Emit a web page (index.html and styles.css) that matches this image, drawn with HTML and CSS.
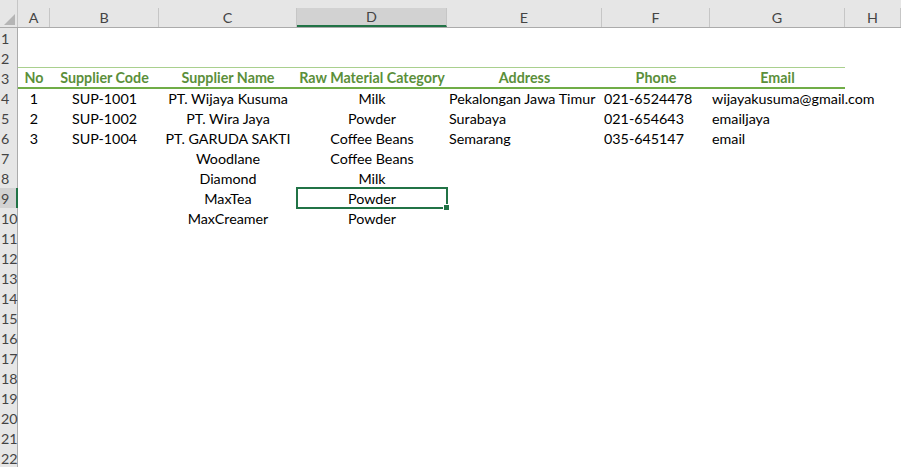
FILE: index.html
```html
<!DOCTYPE html>
<html>
<head>
  <meta http-equiv="CONTENT-TYPE" content="text/html; charset=UTF-8">
  <title>Suppliers</title>
  <link rel="stylesheet" href="styles.css">
</head>
<body>
  <div class="sheet">
    <div class="row colhead">
      <div class="corner"></div>
      <div class="ch">A</div>
      <div class="ch">B</div>
      <div class="ch">C</div>
      <div class="ch sel">D</div>
      <div class="ch">E</div>
      <div class="ch">F</div>
      <div class="ch">G</div>
      <div class="ch">H</div>
    </div>

    <div class="row"><div class="rh">1</div></div>
    <div class="row"><div class="rh">2</div></div>

    <div class="row head">
      <div class="rh">3</div>
      <div class="c th">No</div>
      <div class="c th">Supplier Code</div>
      <div class="c th">Supplier Name</div>
      <div class="c th">Raw Material Category</div>
      <div class="c th">Address</div>
      <div class="c th">Phone</div>
      <div class="c th">Email</div>
    </div>

    <div class="row">
      <div class="rh">4</div>
      <div class="c">1</div>
      <div class="c">SUP-1001</div>
      <div class="c">PT. Wijaya Kusuma</div>
      <div class="c">Milk</div>
      <div class="c l">Pekalongan Jawa Timur</div>
      <div class="c l">021-6524478</div>
      <div class="c l">wijayakusuma@gmail.com</div>
    </div>
    <div class="row">
      <div class="rh">5</div>
      <div class="c">2</div>
      <div class="c">SUP-1002</div>
      <div class="c">PT. Wira Jaya</div>
      <div class="c">Powder</div>
      <div class="c l">Surabaya</div>
      <div class="c l">021-654643</div>
      <div class="c l">emailjaya</div>
    </div>
    <div class="row">
      <div class="rh">6</div>
      <div class="c">3</div>
      <div class="c">SUP-1004</div>
      <div class="c">PT. GARUDA SAKTI</div>
      <div class="c">Coffee Beans</div>
      <div class="c l">Semarang</div>
      <div class="c l">035-645147</div>
      <div class="c l">email</div>
    </div>
    <div class="row">
      <div class="rh">7</div>
      <div class="c"></div>
      <div class="c"></div>
      <div class="c">Woodlane</div>
      <div class="c">Coffee Beans</div>
    </div>
    <div class="row">
      <div class="rh">8</div>
      <div class="c"></div>
      <div class="c"></div>
      <div class="c">Diamond</div>
      <div class="c">Milk</div>
    </div>
    <div class="row">
      <div class="rh sel">9</div>
      <div class="c"></div>
      <div class="c"></div>
      <div class="c">MaxTea</div>
      <div class="c active">Powder</div>
    </div>
    <div class="row">
      <div class="rh">10</div>
      <div class="c"></div>
      <div class="c"></div>
      <div class="c">MaxCreamer</div>
      <div class="c">Powder</div>
    </div>

    <div class="row"><div class="rh">11</div></div>
    <div class="row"><div class="rh">12</div></div>
    <div class="row"><div class="rh">13</div></div>
    <div class="row"><div class="rh">14</div></div>
    <div class="row"><div class="rh">15</div></div>
    <div class="row"><div class="rh">16</div></div>
    <div class="row"><div class="rh">17</div></div>
    <div class="row"><div class="rh">18</div></div>
    <div class="row"><div class="rh">19</div></div>
    <div class="row"><div class="rh">20</div></div>
    <div class="row"><div class="rh">21</div></div>
    <div class="row"><div class="rh">22</div></div>
  </div>
</body>
</html>
```

FILE: styles.css
```css
body {
  margin: 0;
  background: white;
  font-family: Lato, "Open Sans", sans-serif;
  font-size: 14.3px;
  color: #000;
  overflow: hidden;
}
.sheet {
  width: 901px;
  height: 467px;
  overflow: hidden;
}
.row {
  display: grid;
  grid-template-columns: 18px 32px 109px 138px 150px 155px 108px 135px 56px;
  height: 20px;
}
.colhead {
  height: 28px;
  background: #e6e6e6;
  border-bottom: 1px solid #ababab;
  box-sizing: border-box;
}
.corner {
  position: relative;
  background: #e6e6e6;
  border-right: 1px solid #c6c6c6;
}
.corner::after {
  content: "";
  position: absolute;
  right: 2px;
  bottom: 2px;
  border-left: 11px solid transparent;
  border-bottom: 11px solid #b5b5b5;
}
.ch {
  margin-top: 8px;
  height: 19px;
  line-height: 19px;
  text-align: center;
  color: #444;
  border-right: 1px solid #c6c6c6;
  box-sizing: border-box;
}
.ch.sel {
  background: #d2d2d2;
  border-bottom: 2px solid #217346;
  line-height: 17px;
}
.rh {
  background: #e6e6e6;
  border-right: 1px solid #ababab;
  border-bottom: 1px solid #d4d4d4;
  box-sizing: border-box;
  color: #444;
  line-height: 19px;
  padding: 1px 0 0 1px;
}
.rh.sel {
  background: #d2d2d2;
  border-right: 2px solid #217346;
}
.c {
  line-height: 20px;
  padding-top: 1px;
  text-align: center;
  white-space: nowrap;
  box-sizing: border-box;
  height: 20px;
}
.c.l {
  text-align: left;
  padding-left: 2px;
}
.head .c {
  border-top: 1px solid #a9d08e;
  border-bottom: 2px solid #70ad47;
  line-height: 18px;
  padding-top: 1px;
  margin-top: -1px;
  height: 22px;
}
.th {
  font-weight: bold;
  color: #5b8f3a;
}
.active {
  position: relative;
  border: 2px solid #217346;
  margin: -1px -1px 0 -1px;
  padding-top: 1px;
  line-height: 17px;
  height: 22px;
}
.active::after {
  content: "";
  position: absolute;
  right: -4px;
  bottom: -4px;
  width: 5px;
  height: 5px;
  background: #217346;
  border: 1px solid white;
}
```
